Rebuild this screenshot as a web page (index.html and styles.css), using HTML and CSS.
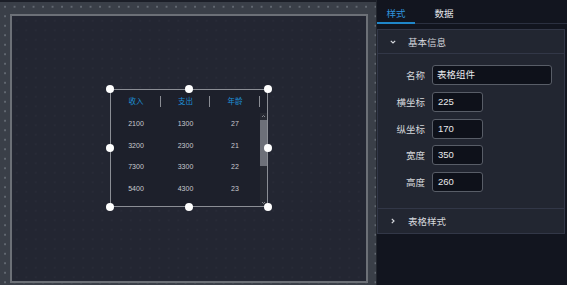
FILE: index.html
```html
<!DOCTYPE html>
<html lang="zh">
<head>
<meta charset="utf-8">
<title>表格组件</title>
<link rel="stylesheet" href="styles.css">
</head>
<body>
<div class="app">
  <div class="work">
    <div class="canvas">
      <div class="widget">
        <div class="table">
          <div class="thead">
            <div class="th">收入</div>
            <div class="th">支出</div>
            <div class="th">年龄</div>
          </div>
          <div class="tbody-wrap">
            <div class="tbody">
              <div class="tr"><span>2100</span><span>1300</span><span>27</span></div>
              <div class="tr"><span>3200</span><span>2300</span><span>21</span></div>
              <div class="tr"><span>7300</span><span>3300</span><span>22</span></div>
              <div class="tr"><span>5400</span><span>4300</span><span>23</span></div>
            </div>
            <div class="scrollbar">
              <svg class="arrow" width="7" height="6" viewBox="0 0 7 6"><path d="M2 4 L3.5 2.5 L5 4" fill="none" stroke="#9a9ca3" stroke-width="0.8"/></svg>
              <div class="thumb"></div>
              <svg class="arrow arrow-down" width="7" height="6" viewBox="0 0 7 6"><path d="M2 2 L3.5 3.5 L5 2" fill="none" stroke="#9a9ca3" stroke-width="0.8"/></svg>
            </div>
          </div>
        </div>
        <span class="handle h-tl"></span>
        <span class="handle h-tc"></span>
        <span class="handle h-tr"></span>
        <span class="handle h-ml"></span>
        <span class="handle h-mr"></span>
        <span class="handle h-bl"></span>
        <span class="handle h-bc"></span>
        <span class="handle h-br"></span>
      </div>
    </div>
  </div>
  <div class="panel">
    <div class="tabs">
      <div class="tab active">样式</div>
      <div class="tab">数据</div>
    </div>
    <div class="card">
      <div class="card-head">
        <svg class="chev" width="6" height="6" viewBox="0 0 6 6"><path d="M0.8 1.8 L3 4 L5.2 1.8" fill="none" stroke="#d6d8dd" stroke-width="1.2"/></svg>
        <span>基本信息</span>
      </div>
      <div class="card-body">
        <div class="row"><label class="lbl">名称</label><div class="input wide">表格组件</div></div>
        <div class="row"><label class="lbl">横坐标</label><div class="input">225</div></div>
        <div class="row"><label class="lbl">纵坐标</label><div class="input">170</div></div>
        <div class="row"><label class="lbl">宽度</label><div class="input">350</div></div>
        <div class="row"><label class="lbl">高度</label><div class="input">260</div></div>
      </div>
      <div class="card-head last">
        <svg class="chev" width="6" height="6" viewBox="0 0 6 6"><path d="M1.8 0.8 L4 3 L1.8 5.2" fill="none" stroke="#d6d8dd" stroke-width="1.2"/></svg>
        <span>表格样式</span>
      </div>
    </div>
  </div>
</div>
</body>
</html>
```

FILE: styles.css
```css
* { box-sizing: border-box; }
html, body {
  margin: 0;
  padding: 0;
  width: 567px;
  height: 285px;
  overflow: hidden;
  background: #12151f;
  font-family: "Liberation Sans", "Noto Sans CJK SC", sans-serif;
}
.app {
  display: flex;
  width: 567px;
  height: 285px;
}
.work {
  width: 376px;
  height: 285px;
  border-top: 2px solid #1b1e27;
  padding: 12px 0 0 10px;
  background-color: #3a3f48;
  background-image: radial-gradient(circle, #626871 0.8px, transparent 1.2px);
  background-size: 9.5px 9.5px;
  background-position: 0.3px 0px;
}
.canvas {
  position: relative;
  width: 358px;
  height: 269px;
  border: 2px solid #6c7077;
  background-color: #232632;
  background-image: radial-gradient(circle, #292c38 0.6px, transparent 1px);
  background-size: 9.5px 9.5px;
}
.widget {
  position: absolute;
  left: 98px;
  top: 73px;
  width: 158px;
  height: 118px;
  border: 1px solid #8b8e95;
  background: #1d202b;
}
.table {
  width: 156px;
  height: 116px;
  display: flex;
  flex-direction: column;
}
.thead {
  display: grid;
  grid-template-columns: 50px 49px 50px 7px;
  height: 23px;
}
.th {
  position: relative;
  text-align: center;
  line-height: 23px;
  font-size: 7.5px;
  color: #1e8fd6;
}
.th::after {
  content: "";
  position: absolute;
  right: 0;
  top: 6px;
  width: 1px;
  height: 11px;
  background: #8a8d94;
}
.tbody-wrap {
  display: flex;
  height: 93px;
}
.tbody {
  width: 149px;
}
.tr {
  display: grid;
  grid-template-columns: 50px 49px 50px;
  height: 21.5px;
  line-height: 21.5px;
  font-size: 7px;
  color: #c8cacf;
  text-align: center;
}
.scrollbar {
  width: 7px;
  height: 93px;
  background: #262932;
  display: flex;
  flex-direction: column;
}
.arrow { display: block; flex: none; }
.thumb {
  margin-top: 1px;
  height: 46px;
  background: #6d7079;
}
.arrow-down { margin-top: auto; }
.handle {
  position: absolute;
  width: 8px;
  height: 8px;
  border-radius: 50%;
  background: #ffffff;
}
.h-tl { left: -5px; top: -5px; }
.h-tc { left: 74px; top: -5px; }
.h-tr { right: -5px; top: -5px; }
.h-ml { left: -5px; top: 54px; }
.h-mr { right: -5px; top: 54px; }
.h-bl { left: -5px; bottom: -5px; }
.h-bc { left: 74px; bottom: -5px; }
.h-br { right: -5px; bottom: -5px; }

.panel {
  flex: 1;
  height: 285px;
  border-left: 1px solid #22262e;
  background: #12151f;
}
.tabs {
  display: flex;
  height: 24px;
  border-bottom: 1px solid #2b3040;
}
.tab {
  width: 38px;
  padding-top: 5px;
  line-height: 17px;
  text-align: center;
  font-size: 9.5px;
  color: #e4e6ea;
}
.tab + .tab { margin-left: 10px; }
.tab.active {
  color: #2f93dc;
  border-bottom: 2px solid #1f86c9;
  margin-bottom: -1px;
}
.card {
  margin: 5px 2px 0 0;
  background: #222631;
  border: 1px solid #323747;
}
.card-head {
  display: flex;
  align-items: center;
  height: 23px;
  padding-left: 12px;
  font-size: 9.5px;
  color: #d6d8dd;
  gap: 12px;
}
.card-head.last { height: 24px; }
.chev { display: block; flex: none; }
.card-body {
  border-top: 1px solid #323747;
  border-bottom: 1px solid #323747;
  padding: 11px 0 9px;
}
.row {
  display: flex;
  align-items: center;
  gap: 7px;
  margin-bottom: 6.75px;
}
.lbl {
  width: 47px;
  text-align: right;
  font-size: 9.5px;
  color: #d4d6da;
}
.input {
  width: 51px;
  height: 20px;
  line-height: 18px;
  padding-left: 5px;
  background: #0e111a;
  border: 1px solid #585d67;
  border-radius: 3px;
  font-size: 9.5px;
  color: #e8e9ec;
}
.input.wide {
  width: 120px;
  padding-left: 4px;
}
```
